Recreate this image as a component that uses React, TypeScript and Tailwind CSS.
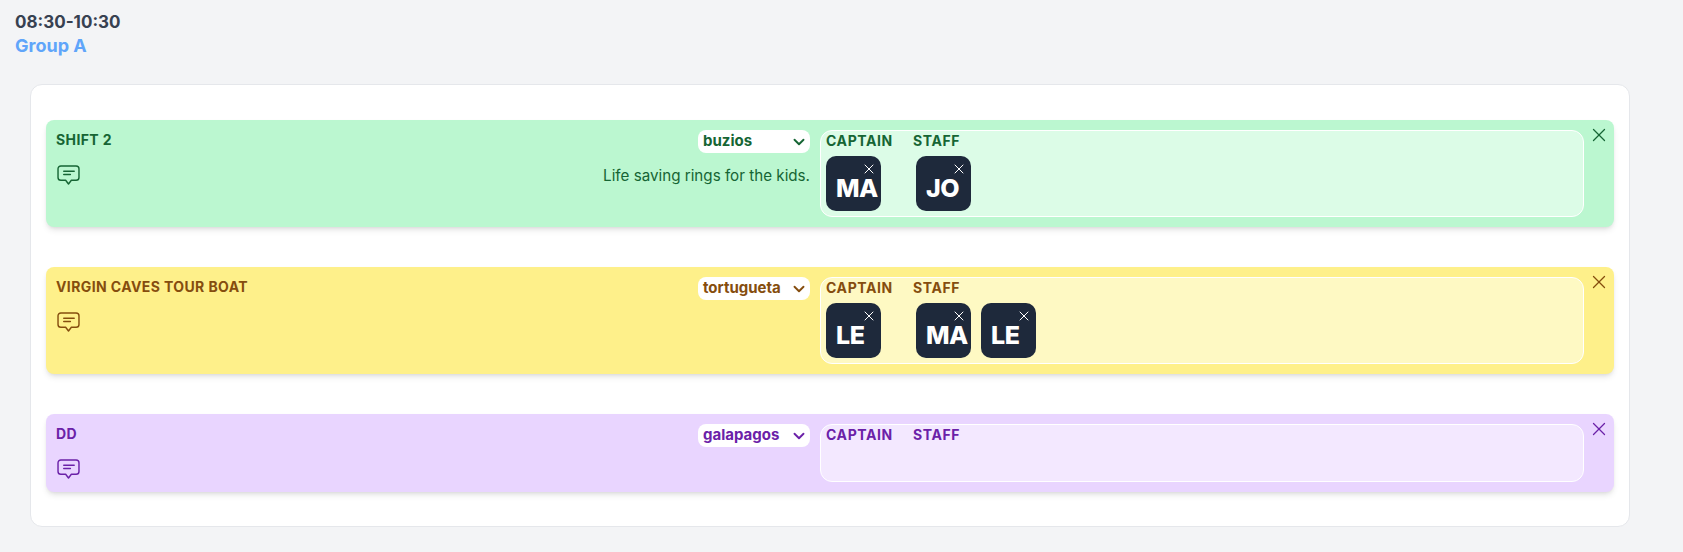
import React from 'react';
import { ChevronDown, X } from 'lucide-react';

interface Shift {
  title: string;
  boat: string;
  note?: string;
  captains: string[];
  staff: string[];
  rowClass: string;
  panelClass: string;
  textClass: string;
}

const shifts: Shift[] = [
  {
    title: 'SHIFT 2',
    boat: 'buzios',
    note: 'Life saving rings for the kids.',
    captains: ['MA'],
    staff: ['JO'],
    rowClass: 'bg-[#bbf7d0]',
    panelClass: 'bg-[#dcfce7]',
    textClass: 'text-[#166534]',
  },
  {
    title: 'VIRGIN CAVES TOUR BOAT',
    boat: 'tortugueta',
    captains: ['LE'],
    staff: ['MA', 'LE'],
    rowClass: 'bg-[#fef08a]',
    panelClass: 'bg-[#fef9c3]',
    textClass: 'text-[#854d0e]',
  },
  {
    title: 'DD',
    boat: 'galapagos',
    captains: [],
    staff: [],
    rowClass: 'bg-[#e9d5ff]',
    panelClass: 'bg-[#f3e8ff]',
    textClass: 'text-[#6b21a8]',
  },
];

const CommentIcon = () => (
  <svg width="23" height="20" viewBox="0 0 24 21" fill="none" stroke="currentColor" strokeWidth="1.5" strokeLinecap="round" strokeLinejoin="round">
    <path d="M4 1h16a3 3 0 0 1 3 3v9a3 3 0 0 1-3 3h-5l-3 4-3-4H4a3 3 0 0 1-3-3V4a3 3 0 0 1 3-3z" />
    <path d="M7 6.5h11M7 10h7" />
  </svg>
);

const Avatar = ({ initials }: { initials: string }) => (
  <div className="relative flex h-[55px] w-[55px] items-center rounded-[10px] bg-[#1e293b] pt-[10px] pl-[10px] text-[25px] font-extrabold tracking-[-0.5px] text-white">
    {initials}
    <X className="absolute top-[5px] right-[4px] h-4 w-4 text-white" strokeWidth={1.5} />
  </div>
);

const ShiftRow = ({ shift }: { shift: Shift }) => (
  <div className={`flex items-stretch rounded-lg py-[10px] pl-[10px] shadow-md ${shift.rowClass} ${shift.textClass}`}>
    <div className="flex min-w-0 flex-1 justify-between pr-[10px]">
      <div className="flex flex-col">
        <div className="text-[14px] leading-[20px] font-bold tracking-[0.4px]">{shift.title}</div>
        <div className="mt-[15px] ml-px">
          <CommentIcon />
        </div>
      </div>
      <div className="flex flex-col items-end">
        <div className="flex h-[23px] w-[112px] items-center justify-between rounded-lg bg-white pr-[2px] pl-[5px] text-[15px] font-bold">
          {shift.boat}
          <ChevronDown className="h-[18px] w-[18px]" strokeWidth={2.5} />
        </div>
        {shift.note && <div className="mt-[13px] text-[15.2px] leading-[20px]">{shift.note}</div>}
      </div>
    </div>
    <div className={`flex w-[764px] gap-[20px] rounded-xl border border-white px-[5px] pb-[5px] ${shift.panelClass}`}>
      <div className="w-[67px]">
        <div className="text-[14px] leading-[20px] font-bold tracking-[0.6px]">CAPTAIN</div>
        {shift.captains.length > 0 ? (
          <div className="mt-[5px] flex gap-[10px]">
            {shift.captains.map((c) => (
              <Avatar key={c} initials={c} />
            ))}
          </div>
        ) : (
          <div className="h-[31px]" />
        )}
      </div>
      <div>
        <div className="text-[14px] leading-[20px] font-bold tracking-[0.6px]">STAFF</div>
        {shift.staff.length > 0 && (
          <div className="mt-[5px] flex gap-[10px] pl-[3px]">
            {shift.staff.map((s, i) => (
              <Avatar key={i} initials={s} />
            ))}
          </div>
        )}
      </div>
    </div>
    <div className="flex w-[30px] justify-center">
      <X className="-mt-[6px] h-[22px] w-[22px]" strokeWidth={1.4} />
    </div>
  </div>
);

export default function App() {
  return (
    <div className="min-h-[552px] bg-[#f3f4f6] px-[15px] pt-[10px] font-['Inter',sans-serif]">
      <div className="text-[17px] leading-[24px] font-bold text-[#374151]">08:30-10:30</div>
      <div className="text-[18px] leading-[24px] font-bold text-[#60a5fa]">Group A</div>
      <div className="mt-[26px] ml-[15px] flex w-[1600px] flex-col gap-[40px] rounded-xl border border-[#e5e7eb] bg-white px-[15px] pt-[35px] pb-[34px]">
        {shifts.map((shift) => (
          <ShiftRow key={shift.title} shift={shift} />
        ))}
      </div>
    </div>
  );
}
